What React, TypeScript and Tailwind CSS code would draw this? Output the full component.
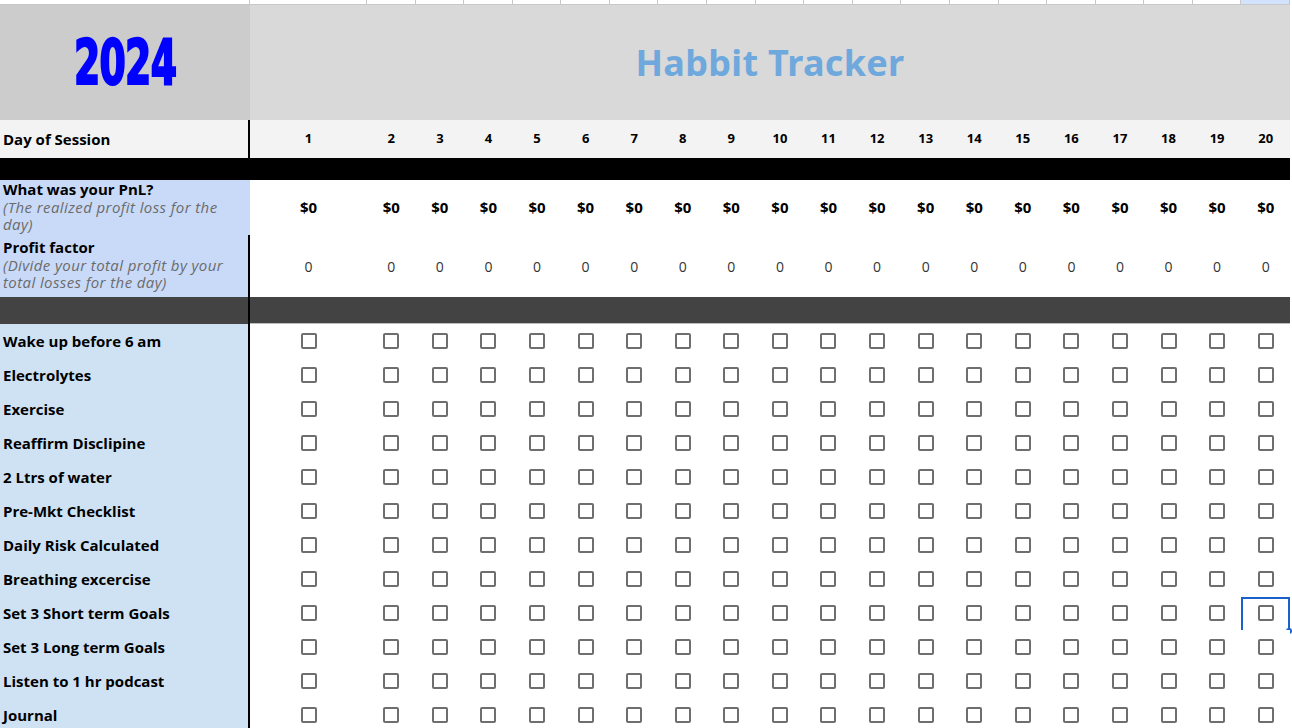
import React from 'react';

const days = Array.from({ length: 20 }, (_, i) => i + 1);

const habits = [
  'Wake up before 6 am',
  'Electrolytes',
  'Exercise',
  'Reaffirm Disclipine',
  '2 Ltrs of water',
  'Pre-Mkt Checklist',
  'Daily Risk Calculated',
  'Breathing excercise',
  'Set 3 Short term Goals',
  'Set 3 Long term Goals',
  'Listen to 1 hr podcast',
  'Journal',
];

// the cell that is selected in the sheet
const selected = { row: 8, day: 20 };

function Checkbox() {
  return <div className="w-[16px] h-[16px] rounded-[2px] border-2 border-[#6e6e6e] bg-white" />;
}

export default function App() {
  const font = "font-['Open_Sans',_'Noto_Sans',_sans-serif]";

  return (
    <div className={`w-[1292px] h-[728px] overflow-hidden bg-white ${font} text-black`}>
      <div className="w-[1290px] grid grid-cols-[250px_117px_repeat(19,minmax(0,1fr))]">
        {/* Top gridline strip */}
        <div className="h-[5px] bg-white border-r border-b border-[#c8c8c8]" />
        {days.map(d => (
          <div
            key={`top-${d}`}
            className={`h-[5px] border-r border-b border-[#c8c8c8] ${d === 20 ? 'bg-[#d3e3fd]' : 'bg-white'}`}
          />
        ))}

        {/* Title header */}
        <div className="h-[115px] bg-[#cccccc] flex items-center justify-center">
          <span className="font-['DejaVu_Sans_Condensed',_sans-serif] font-bold text-[56px] leading-none text-[#0000ff] [-webkit-text-stroke:2px_#0000ff] scale-x-[0.75] scale-y-[1.12] tracking-[-1px]">
            2024
          </span>
        </div>
        <div className="col-span-20 h-[115px] bg-[#d9d9d9] flex items-center justify-center">
          <span className="font-['Noto_Sans',_sans-serif] font-bold text-[36px] text-[#6fa8dc] tracking-[0.3px]">
            Habbit Tracker
          </span>
        </div>

        {/* Day of Session row */}
        <div className="h-[38px] bg-[#f3f3f3] border-r-2 border-black flex items-center pl-[3px] text-[15px] font-bold">
          Day of Session
        </div>
        {days.map(d => (
          <div key={`day-${d}`} className="h-[38px] bg-[#f3f3f3] flex items-center justify-center text-[13px] font-bold">
            {d}
          </div>
        ))}

        {/* Black divider */}
        <div className="col-span-21 h-[22px] bg-black" />

        {/* PnL row */}
        <div className="h-[55px] bg-[#c9daf8] pl-[3px] pt-[1px] text-[15px] leading-[17.5px]">
          <div className="font-bold">What was your PnL?</div>
          <div className="italic text-[#6b6b6b] tracking-[0.4px] pr-[20px]">(The realized profit loss for the day)</div>
        </div>
        {days.map(d => (
          <div key={`pnl-${d}`} className="h-[55px] bg-white flex items-center justify-center text-[15px] font-bold">
            $0
          </div>
        ))}

        {/* Profit factor row */}
        <div className="h-[62px] bg-[#c9daf8] border-r-2 border-black pl-[3px] pt-[4px] text-[15px] leading-[17.5px]">
          <div className="font-bold">Profit factor</div>
          <div className="italic text-[#6b6b6b] tracking-[0.4px] pr-[8px]">(Divide your total profit by your total losses for the day)</div>
        </div>
        {days.map(d => (
          <div key={`pf-${d}`} className="h-[62px] bg-white flex items-center justify-center text-[14px] text-[#333333]">
            0
          </div>
        ))}

        {/* Dark divider */}
        <div className="h-[27px] bg-[#434343] border-r-2 border-black" />
        <div className="col-span-20 h-[27px] bg-[#434343] border-b border-[#bdbdbd]" />

        {/* Habit rows */}
        {habits.map((habit, r) => (
          <React.Fragment key={habit}>
            <div className="h-[34px] bg-[#cfe2f3] border-r-2 border-black flex items-center pl-[3px] text-[15px] font-bold">
              {habit}
            </div>
            {days.map(d => (
              <div key={`${habit}-${d}`} className="relative h-[34px] bg-white flex items-center justify-center">
                <Checkbox />
                {selected.row === r && selected.day === d && (
                  <div className="absolute inset-x-0 top-[1px] bottom-[-2px] border-2 border-[#1a62c9]">
                    <div className="absolute right-[-4px] bottom-[-4px] w-[6px] h-[6px] rounded-full bg-[#1a62c9]" />
                  </div>
                )}
              </div>
            ))}
          </React.Fragment>
        ))}
      </div>
    </div>
  );
}
